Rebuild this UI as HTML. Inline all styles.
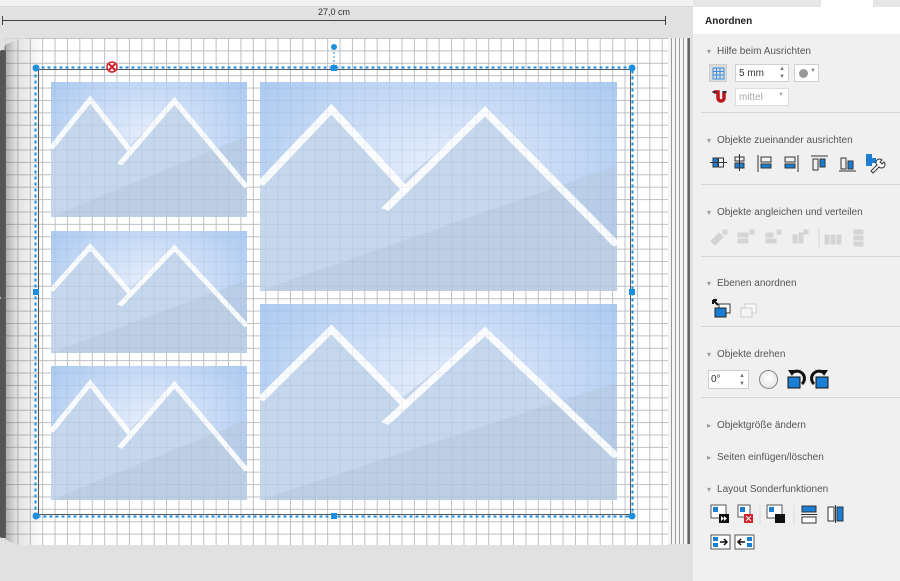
<!DOCTYPE html>
<html><head><meta charset="utf-8"><style>
*{margin:0;padding:0;box-sizing:border-box}
body{width:900px;height:581px;overflow:hidden;background:#e1e1e1;font-family:"Liberation Sans",sans-serif;position:relative}
.abs{position:absolute}
.grid{background-color:#fff;background-image:linear-gradient(#c9c9c9 1px,transparent 1px),linear-gradient(90deg,#c9c9c9 1px,transparent 1px);background-size:12.4px 12.4px;background-position:1px 0px}
.photo{position:absolute;overflow:hidden}
.panel{position:absolute;left:693px;top:0;width:207px;height:581px;background:#f0f0f0}
.sec{position:absolute;left:14px;font-size:10px;color:#555}
.sec:before{content:"▾";font-size:8px;color:#999;margin-right:6px}
.sec.c:before{content:"▸"}
.hr{position:absolute;left:8px;right:0;height:1px;background:#d6d6d6}
.ic{position:absolute}
.ov{position:absolute;left:4px;top:38px;width:664px;height:507px;background-image:linear-gradient(rgba(120,140,170,.13) 1px,transparent 1px),linear-gradient(90deg,rgba(120,140,170,.13) 1px,transparent 1px);background-size:12.4px 12.4px;background-position:1px 0px;pointer-events:none}
</style></head><body>
<div class="abs" style="left:0;top:0;width:693px;height:7px;background:#f2f2f2;border-bottom:1px solid #d8d8d8"></div>
<div class="abs" style="left:2px;top:20px;width:664px;height:1px;background:#444"></div>
<div class="abs" style="left:2px;top:16px;width:1px;height:9px;background:#444"></div>
<div class="abs" style="left:665px;top:16px;width:1px;height:9px;background:#444"></div>
<div class="abs" style="left:310px;top:7px;width:48px;font-size:9px;color:#333;text-align:center;background:#e1e1e1">27,0 cm</div>
<div class="abs" style="left:664px;top:38px;width:26px;height:506px;background:repeating-linear-gradient(90deg,#f4f4f4 0 3px,#9a9a9a 3px 4px);border-right:2px solid #666"></div>
<div class="abs grid" style="left:4px;top:38px;width:664px;height:507px;border-radius:38px 0 0 22px/10px 0 0 10px"></div>
<div class="abs" style="left:4px;top:38px;width:40px;height:507px;background:linear-gradient(90deg,rgba(0,0,0,.35),rgba(0,0,0,.12) 30%,rgba(0,0,0,0));border-radius:38px 0 0 22px/10px 0 0 10px"></div>
<div class="abs" style="left:0;top:50px;width:6px;height:248px;background:#555;border-radius:2px"></div>
<div class="abs" style="left:0;top:298px;width:6px;height:240px;background:#555;border-radius:2px"></div>
<div class="abs" style="left:38px;top:69px;width:593px;height:446px;border:1.5px solid #555"></div>
<svg class="abs" style="left:0;top:0" width="693" height="581">
<defs>
<radialGradient id="sky" cx="50%" cy="40%" r="70%"><stop offset="0" stop-color="#e6eefc"/><stop offset="1" stop-color="#a6c6ef"/></radialGradient>
</defs>
</svg>
<div class="photo" style="left:51px;top:82px;width:196px;height:135px"><svg width="100%" height="100%" viewBox="0 0 100 100" preserveAspectRatio="none"><rect width="100" height="100" fill="url(#sky)"/><polygon points="0,49 20,13 39,49 63,14 100,78 100,100 0,100" fill="#c5d7ec"/><polygon points="0,100 100,40 100,100" fill="#b7cadf" opacity=".6"/><polyline points="0,49 20,13 41,52" fill="none" stroke="#fff" stroke-width="3" opacity=".9"/><polyline points="35,61 63,14 100,78" fill="none" stroke="#fff" stroke-width="3" opacity=".9"/></svg></div>
<div class="photo" style="left:51px;top:231px;width:196px;height:122px"><svg width="100%" height="100%" viewBox="0 0 100 100" preserveAspectRatio="none"><rect width="100" height="100" fill="url(#sky)"/><polygon points="0,49 20,13 39,49 63,14 100,78 100,100 0,100" fill="#c5d7ec"/><polygon points="0,100 100,40 100,100" fill="#b7cadf" opacity=".6"/><polyline points="0,49 20,13 41,52" fill="none" stroke="#fff" stroke-width="3" opacity=".9"/><polyline points="35,61 63,14 100,78" fill="none" stroke="#fff" stroke-width="3" opacity=".9"/></svg></div>
<div class="photo" style="left:51px;top:366px;width:196px;height:134px"><svg width="100%" height="100%" viewBox="0 0 100 100" preserveAspectRatio="none"><rect width="100" height="100" fill="url(#sky)"/><polygon points="0,49 20,13 39,49 63,14 100,78 100,100 0,100" fill="#c5d7ec"/><polygon points="0,100 100,40 100,100" fill="#b7cadf" opacity=".6"/><polyline points="0,49 20,13 41,52" fill="none" stroke="#fff" stroke-width="3" opacity=".9"/><polyline points="35,61 63,14 100,78" fill="none" stroke="#fff" stroke-width="3" opacity=".9"/></svg></div>
<div class="photo" style="left:260px;top:82px;width:357px;height:209px"><svg width="100%" height="100%" viewBox="0 0 100 100" preserveAspectRatio="none"><rect width="100" height="100" fill="url(#sky)"/><polygon points="0,49 20,13 39,49 63,14 100,78 100,100 0,100" fill="#c5d7ec"/><polygon points="0,100 100,40 100,100" fill="#b7cadf" opacity=".6"/><polyline points="0,49 20,13 41,52" fill="none" stroke="#fff" stroke-width="2.5" opacity=".9"/><polyline points="35,61 63,14 100,78" fill="none" stroke="#fff" stroke-width="2.5" opacity=".9"/></svg></div>
<div class="photo" style="left:260px;top:304px;width:357px;height:196px"><svg width="100%" height="100%" viewBox="0 0 100 100" preserveAspectRatio="none"><rect width="100" height="100" fill="url(#sky)"/><polygon points="0,49 20,13 39,49 63,14 100,78 100,100 0,100" fill="#c5d7ec"/><polygon points="0,100 100,40 100,100" fill="#b7cadf" opacity=".6"/><polyline points="0,49 20,13 41,52" fill="none" stroke="#fff" stroke-width="2.5" opacity=".9"/><polyline points="35,61 63,14 100,78" fill="none" stroke="#fff" stroke-width="2.5" opacity=".9"/></svg></div>
<div class="ov"></div>
<svg class="abs" style="left:0;top:0" width="693" height="581">
<rect x="35.5" y="67.5" width="597" height="449" fill="none" stroke="#1e8ee0" stroke-width="2" stroke-dasharray="3 3"/>
<line x1="334" y1="48" x2="334" y2="67" stroke="#1e8ee0" stroke-dasharray="2 2"/>
<circle cx="334" cy="47" r="3" fill="#1e8ee0"/>
<circle cx="36" cy="68" r="3.5" fill="#1e8ee0"/><circle cx="632" cy="68" r="3.5" fill="#1e8ee0"/>
<circle cx="36" cy="516" r="3.5" fill="#1e8ee0"/><circle cx="632" cy="516" r="3.5" fill="#1e8ee0"/>
<rect x="331" y="65" width="6" height="6" fill="#1e8ee0"/><rect x="331" y="513" width="6" height="6" fill="#1e8ee0"/>
<rect x="33" y="289" width="6" height="6" fill="#1e8ee0"/><rect x="629" y="289" width="6" height="6" fill="#1e8ee0"/>
<circle cx="112" cy="67" r="5" fill="#fff" stroke="#d2232a" stroke-width="1.5"/>
<path d="M109 64l6 6M115 64l-6 6" stroke="#d2232a" stroke-width="2"/>
</svg>
<div class="panel">
<div class="abs" style="left:0;top:0;width:207px;height:7px;background:#e6e6e6"></div>
<div class="abs" style="left:128px;top:0;width:52px;height:7px;background:#fff"></div>
<div class="abs" style="left:0;top:7px;width:207px;height:27px;background:#fff;font-size:10px;font-weight:bold;color:#222;padding:9px 0 0 12px">Anordnen</div>
<div class="sec" style="top:46px">Hilfe beim Ausrichten</div>
<div class="abs" style="left:16px;top:64px;width:18px;height:18px;background:#dcdcdc;border:1px solid #ccc"><svg width="16" height="16"><path d="M3 3h11v11H3z M3 6.5h11M3 10h11M6.5 3v11M10 3v11" fill="none" stroke="#3a8fe0"/></svg></div>
<div class="abs" style="left:42px;top:64px;width:54px;height:18px;background:#fff;border:1px solid #d0d0d0;font-size:10px;padding:3px 3px;color:#333">5 mm<span style="position:absolute;right:3px;top:0;font-size:6px;color:#777;line-height:8px">▲<br>▼</span></div>
<div class="abs" style="left:101px;top:64px;width:25px;height:18px;background:#fff;border:1px solid #d0d0d0"><span style="position:absolute;left:4px;top:4px;width:9px;height:9px;border-radius:50%;background:#999"></span><span style="position:absolute;left:15px;top:3px;font-size:6px;color:#888">▼</span></div>
<svg class="ic" style="left:18px;top:89px" width="16" height="16"><path d="M3 3h4v6a3 3 0 0 0 6 0V3" fill="none" stroke="#c0141b" stroke-width="3.5"/><path d="M1.5 3h4M11.5 3h4" stroke="#333" stroke-width="2"/></svg>
<div class="abs" style="left:42px;top:88px;width:54px;height:18px;background:#fff;border:1px solid #ddd;font-size:10px;padding:3px;color:#aaa">mittel<span style="position:absolute;right:4px;top:3px;font-size:6px">▼</span></div>
<div class="hr" style="top:112px"></div>
<div class="sec" style="top:135px">Objekte zueinander ausrichten</div>
<svg class="ic" style="left:16px;top:153px" width="185" height="22" fill="none" stroke="#333">
<rect x="4" y="5" width="5" height="9" fill="#1a7fd4"/><rect x="9.5" y="5" width="5" height="9"/><path d="M1 9.5h17"/>
<rect x="26" y="4" width="9" height="4"/><rect x="26" y="10" width="9" height="5" fill="#1a7fd4"/><path d="M30.5 1v17"/>
<path d="M49 2v17"/><rect x="52" y="4" width="10" height="5"/><rect x="52" y="11" width="10" height="4" fill="#1a7fd4"/>
<path d="M89 2v17"/><rect x="76" y="4" width="10" height="5"/><rect x="76" y="11" width="10" height="4" fill="#1a7fd4"/>
<path d="M102 3h17"/><rect x="104" y="6" width="5" height="11"/><rect x="111" y="6" width="5" height="8" fill="#1a7fd4"/>
<path d="M130 18h17"/><rect x="132" y="5" width="5" height="11"/><rect x="139" y="8" width="5" height="8" fill="#1a7fd4"/>
<path d="M157 1h6v4h4v5h-4v3h-6z" fill="#1a7fd4" stroke="none"/><path d="M162 18l6-6a3 3 0 0 1 5-5l-2 2 2 2 2-2a3 3 0 0 1-5 5l-6 6z" fill="#fff"/>
</svg>
<div class="hr" style="top:184px"></div>
<div class="sec" style="top:207px">Objekte angleichen und verteilen</div>
<svg class="ic" style="left:16px;top:227px" width="170" height="22" fill="#d4d4d4" stroke="#d4d4d4">
<path d="M2 14l8-8 4 4-8 8z"/><rect x="14" y="3" width="4" height="4"/>
<rect x="29" y="6" width="10" height="4"/><rect x="29" y="12" width="10" height="4"/><rect x="41" y="3" width="4" height="4"/>
<rect x="57" y="6" width="7" height="4"/><rect x="57" y="12" width="10" height="4"/><rect x="68" y="3" width="4" height="4"/>
<rect x="84" y="8" width="4" height="8"/><rect x="90" y="6" width="4" height="10"/><rect x="95" y="3" width="4" height="4"/>
<path d="M110 2v18" fill="none"/>
<rect x="116" y="8" width="4" height="9"/><rect x="122" y="8" width="4" height="9"/><rect x="128" y="8" width="4" height="9"/>
<rect x="145" y="3" width="9" height="4"/><rect x="145" y="9" width="9" height="4"/><rect x="145" y="15" width="9" height="4"/>
</svg>
<div class="hr" style="top:256px"></div>
<div class="sec" style="top:278px">Ebenen anordnen</div>
<svg class="ic" style="left:18px;top:298px" width="50" height="22">
<rect x="8" y="6" width="11" height="9" fill="#fff" stroke="#333"/><rect x="4" y="10" width="11" height="9" fill="#1a7fd4" stroke="#222"/><path d="M2 2l5 5M2 2h4M2 2v4" stroke="#111" stroke-width="2"/>
<rect x="34" y="6" width="11" height="9" fill="#fafafa" stroke="#ccc"/><rect x="30" y="10" width="11" height="9" fill="#f4f4f4" stroke="#ccc"/>
</svg>
<div class="hr" style="top:326px"></div>
<div class="sec" style="top:349px">Objekte drehen</div>
<div class="abs" style="left:15px;top:370px;width:41px;height:19px;background:#fff;border:1px solid #d0d0d0;font-size:10px;padding:3px 2px;color:#333">0°<span style="position:absolute;right:3px;top:1px;font-size:6px;color:#777;line-height:8px">▲<br>▼</span></div>
<div class="abs" style="left:66px;top:370px;width:19px;height:19px;border-radius:50%;background:radial-gradient(circle at 50% 40%,#fff,#ddd);border:1px solid #888"></div>
<svg class="ic" style="left:93px;top:367px" width="50" height="24">
<rect x="2" y="10" width="12" height="11" fill="#1a7fd4" stroke="#111"/><path d="M6 6a7 7 0 1 1 10 11" fill="none" stroke="#111" stroke-width="3"/><path d="M2 3l7 0-3 6z" fill="#111"/>
<rect x="30" y="10" width="12" height="11" fill="#1a7fd4" stroke="#111"/><path d="M38 6a7 7 0 1 0-10 11" fill="none" stroke="#111" stroke-width="3"/><path d="M42 3l-7 0 3 6z" fill="#111"/>
</svg>
<div class="hr" style="top:397px"></div>
<div class="sec c" style="top:420px">Objektgröße ändern</div>
<div class="sec c" style="top:452px">Seiten einfügen/löschen</div>
<div class="sec" style="top:484px">Layout Sonderfunktionen</div>
<svg class="ic" style="left:16px;top:503px" width="140" height="22">
<rect x="2" y="2" width="15" height="13" fill="#fff" stroke="#555"/><rect x="4" y="4" width="5" height="5" fill="#1a7fd4"/><rect x="10" y="11" width="10" height="9" fill="#111"/><path d="M12 13l3 2.5-3 2.5zM15 13l3 2.5-3 2.5z" fill="#fff"/>
<rect x="29" y="2" width="12" height="12" fill="#fff" stroke="#555"/><rect x="31" y="4" width="5" height="5" fill="#1a7fd4"/><rect x="35" y="11" width="9" height="9" fill="#d2232a"/><path d="M37 13l5 5M42 13l-5 5" stroke="#fff"/>
<path d="M51 2v20" stroke="#ddd"/>
<rect x="58" y="2" width="15" height="13" fill="#fff" stroke="#555"/><rect x="60" y="4" width="5" height="5" fill="#1a7fd4"/><rect x="66" y="11" width="10" height="9" fill="#111"/>
<path d="M85 2v20" stroke="#ddd"/>
<rect x="93" y="3" width="14" height="6" fill="#1a7fd4" stroke="#333"/><path d="M92 11.5h16" stroke="#333"/><rect x="93" y="14" width="14" height="6" fill="#fff" stroke="#333"/>
<rect x="119" y="4" width="6" height="14" fill="#fff" stroke="#333"/><path d="M126.5 2v18" stroke="#333"/><rect x="128" y="4" width="6" height="14" fill="#1a7fd4" stroke="#333"/>
</svg>
<svg class="ic" style="left:16px;top:533px" width="60" height="20">
<rect x="2" y="2" width="19" height="14" fill="#fff" stroke="#555"/><rect x="4" y="4" width="5" height="4" fill="#1a7fd4"/><rect x="4" y="10" width="5" height="4" fill="#1a7fd4"/><path d="M11 9h7M15 6l3 3-3 3" fill="none" stroke="#111" stroke-width="1.5"/>
<rect x="26" y="2" width="19" height="14" fill="#fff" stroke="#555"/><rect x="38" y="4" width="5" height="4" fill="#1a7fd4"/><rect x="38" y="10" width="5" height="4" fill="#1a7fd4"/><path d="M36 9h-7M32 6l-3 3 3 3" fill="none" stroke="#111" stroke-width="1.5"/>
</svg>
</div>
</body></html>
